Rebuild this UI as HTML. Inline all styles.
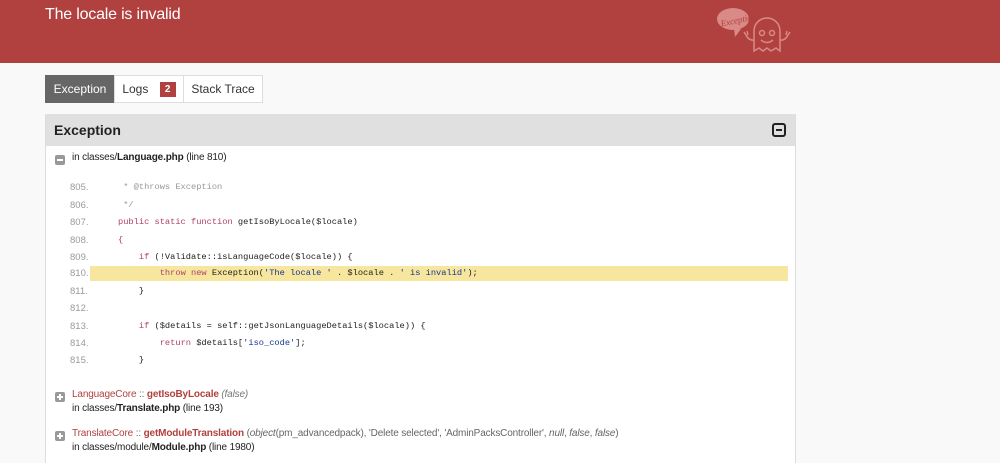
<!DOCTYPE html>
<html style="width:1000px;height:463px;overflow:hidden"><head><meta charset="utf-8"><style>
*{margin:0;padding:0;box-sizing:border-box}
body{width:1000px;height:463px;overflow:hidden;background:#f9f9f9;font-family:"Liberation Sans",Arial,sans-serif;color:#222;position:relative}
.hdr{position:absolute;left:0;top:0;width:1000px;height:63px;background:#b0413e}
.hdr h1{position:absolute;left:45px;top:6px;font-size:16px;font-weight:normal;color:#fff;letter-spacing:-0.2px}
.tabs{position:absolute;left:45px;top:75px;height:28px;display:flex;font-size:12px}
.tab{border:1px solid #ddd;background:#fff;height:28px;line-height:26px;color:#333;margin-right:-1px;text-align:center}
.tab.a{background:#666;color:#fff;border-color:#666}
.badge{display:inline-block;background:#b0413e;color:#fff;font-weight:bold;font-size:10px;width:16px;height:15px;line-height:15px;text-align:center;margin-left:8px;vertical-align:1px}
.panel{position:absolute;left:45px;top:114px;width:751px;height:349px;background:#fff;border-left:1px solid #ddd;border-right:1px solid #ddd}
.ph{height:32px;background:#e0e0e0;padding-left:8px;font-size:14px;font-weight:bold;line-height:32px;color:#222;position:relative}
.minus{position:absolute;right:9px;top:9px;width:14px;height:14px;border:2px solid #222;border-radius:3px}
.minus:after{content:"";position:absolute;left:2px;right:2px;top:4px;height:2px;background:#222}
.sq{position:absolute;width:10px;height:10px;background:#999;border-radius:2px}
.sq:after{content:"";position:absolute;left:2px;right:2px;top:4px;height:2px;background:#fff}
.sq.p:before{content:"";position:absolute;top:2px;bottom:2px;left:4px;width:2px;background:#fff}
.t{position:absolute;font-size:10px;color:#222;white-space:nowrap;letter-spacing:-0.15px}
.ln{position:absolute;left:70px;font-size:9.5px;color:#999}
.cd{position:absolute;font-family:"Liberation Mono",monospace;font-size:8.7px;color:#222;white-space:pre}
.k{color:#b0416e}.c{color:#999}.s{color:#183691}
.hl{position:absolute;left:90px;top:266px;width:698px;height:15px;background:#f6e69e}
.red{color:#b0413e}.fn{color:#b0413e;font-weight:bold}.g{color:#777;font-style:italic}.gr{color:#666}
</style></head><body>
<div class="hdr"><h1>The locale is invalid</h1>
<svg style="position:absolute;left:712px;top:2px" width="90" height="56" viewBox="0 0 90 56"><g fill="none" stroke="#d98a86" stroke-width="1.5"><ellipse cx="21" cy="17" rx="16" ry="11" fill="#d98a86" stroke="none"/><path d="M22 26 l1 9 l6-8" fill="#d98a86" stroke="none"/><path d="M42 49 v-20 a13 13 0 0 1 26 0 v20 l-4-3 -5 3 -4-3 -4 3 -4-3 z"/><circle cx="50" cy="31" r="2.5"/><circle cx="60" cy="31" r="2.5"/><path d="M49 38 q6 5 12 0"/><path d="M42 38 q-5 1 -8-5 M34 33 l-2-3 M36 33 l-1-4 M68 38 q5 1 8-5 M76 33 l2-3 M74 33 l1-4"/></g><text x="8" y="22" font-family="Liberation Serif" font-style="italic" font-size="9" fill="#b0413e" transform="rotate(-12 21 17)">Exception!</text></svg>
</div>
<div class="tabs"><div class="tab a" style="width:70px">Exception</div><div class="tab" style="width:70px">Logs <span class="badge">2</span></div><div class="tab" style="width:80px">Stack Trace</div></div>
<div class="panel">
<div class="ph">Exception<span class="minus"></span></div>
</div>
<div class="sq" style="left:55px;top:155px"></div>
<div class="t" style="left:72px;top:152px">in classes/<b>Language.php</b> (line 810)</div>
<div class="hl"></div>
<div class="ln" style="top:182px">805.</div><div class="cd c" style="left:118px;top:182px"> * @throws Exception</div>
<div class="ln" style="top:200px">806.</div><div class="cd c" style="left:118px;top:200px"> */</div>
<div class="ln" style="top:217px">807.</div><div class="cd" style="left:118px;top:217px"><span class="k">public static function</span> getIsoByLocale($locale)</div>
<div class="ln" style="top:235px">808.</div><div class="cd k" style="left:118px;top:235px">{</div>
<div class="ln" style="top:252px">809.</div><div class="cd" style="left:118px;top:252px">    <span class="k">if</span> (!Validate::isLanguageCode($locale)) {</div>
<div class="ln" style="top:268px">810.</div><div class="cd" style="left:118px;top:268px">        <span class="k">throw new</span> Exception(<span class="s">'The locale '</span> . $locale . <span class="s">' is invalid'</span>);</div>
<div class="ln" style="top:286px">811.</div><div class="cd" style="left:118px;top:286px">    }</div>
<div class="ln" style="top:303px">812.</div>
<div class="ln" style="top:321px">813.</div><div class="cd" style="left:118px;top:321px">    <span class="k">if</span> ($details = self::getJsonLanguageDetails($locale)) {</div>
<div class="ln" style="top:338px">814.</div><div class="cd" style="left:118px;top:338px">        <span class="k">return</span> $details[<span class="s">'iso_code'</span>];</div>
<div class="ln" style="top:355px">815.</div><div class="cd" style="left:118px;top:355px">    }</div>
<div class="sq p" style="left:55px;top:392px"></div>
<div class="t" style="left:72px;top:389px"><span class="red">LanguageCore</span> <span class="gr">::</span> <span class="fn">getIsoByLocale</span> <span class="g">(false)</span></div>
<div class="t" style="left:72px;top:403px">in classes/<b>Translate.php</b> (line 193)</div>
<div class="sq p" style="left:55px;top:431px"></div>
<div class="t" style="left:72px;top:428px"><span class="red">TranslateCore</span> <span class="gr">::</span> <span class="fn">getModuleTranslation</span> <span class="gr">(<i>object</i>(pm_advancedpack), 'Delete selected', 'AdminPacksController', <i>null</i>, <i>false</i>, <i>false</i>)</span></div>
<div class="t" style="left:72px;top:442px">in classes/module/<b>Module.php</b> (line 1980)</div>
</body></html>
